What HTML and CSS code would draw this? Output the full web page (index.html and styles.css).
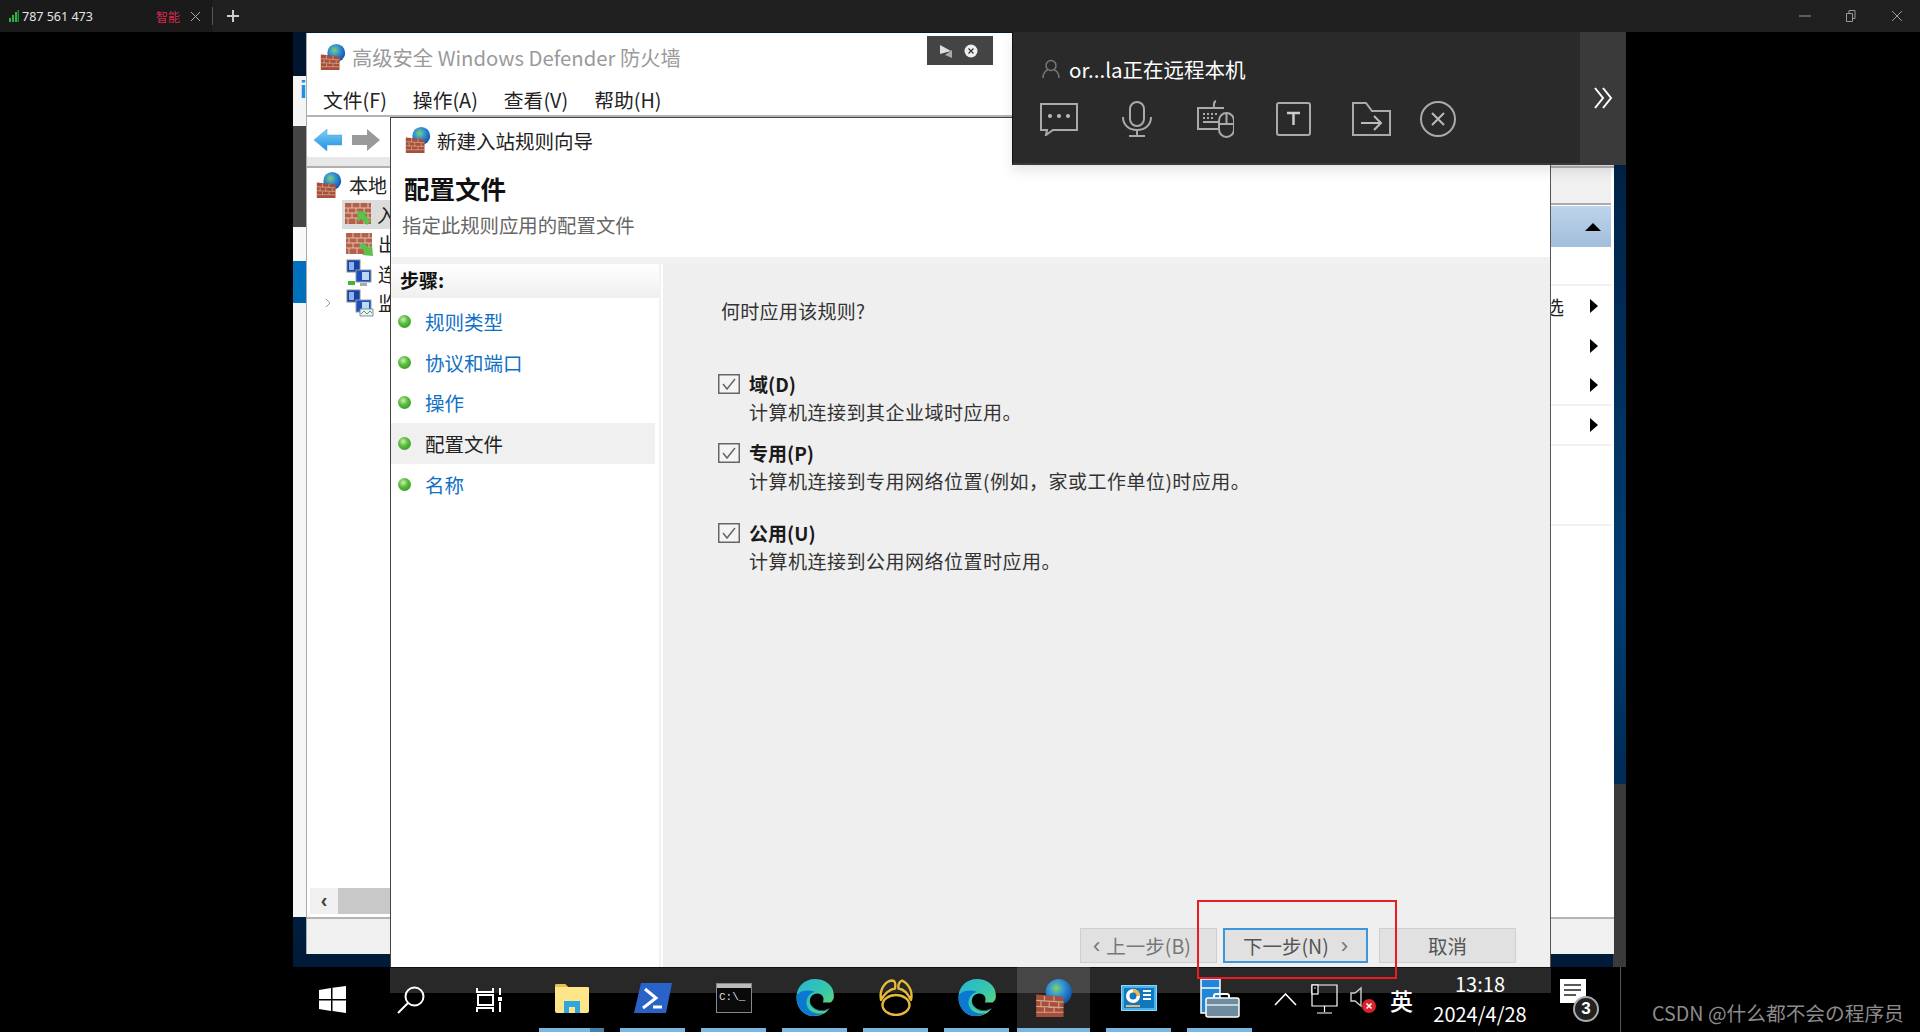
FILE: index.html
```html
<!DOCTYPE html>
<html lang="zh-CN">
<head>
<meta charset="utf-8">
<title>远程桌面</title>
<link rel="stylesheet" href="styles.css">
</head>
<body>
<svg class="defs" width="0" height="0" aria-hidden="true">
  <defs>
    <radialGradient id="globe" cx="40%" cy="35%" r="70%">
      <stop offset="0" stop-color="#7fd36a"/><stop offset=".45" stop-color="#2f8fd8"/><stop offset="1" stop-color="#0c4f9e"/>
    </radialGradient>
    <radialGradient id="dot" cx="40%" cy="35%" r="70%">
      <stop offset="0" stop-color="#c8f0b0"/><stop offset=".5" stop-color="#58bd3c"/><stop offset="1" stop-color="#3a9a28"/>
    </radialGradient>
    <linearGradient id="arrowblue" x1="0" y1="0" x2="0" y2="1">
      <stop offset="0" stop-color="#7fd0f8"/><stop offset="1" stop-color="#1e8fe0"/>
    </linearGradient>
    <linearGradient id="edgeg" x1="0" y1="0" x2="1" y2="1">
      <stop offset="0" stop-color="#27b4d8"/><stop offset=".55" stop-color="#38c8a8"/><stop offset="1" stop-color="#7fdc60"/>
    </linearGradient>
    <symbol id="firewall" viewBox="0 0 32 32">
      <circle cx="20" cy="11" r="11" fill="url(#globe)"/>
      <path d="M1 13l23 2v17H1z" fill="#a5503a"/>
      <path d="M1 18l23 1.500M1 23l23 1M1 28h23M8 14v5M16 14.500v5M5 19v5M12 19.500v5M20 20v5M8 24v4M16 24v4" stroke="#d8a18e" stroke-width="1" fill="none"/>
    </symbol>
    <symbol id="edge" viewBox="0 0 40 40">
      <path d="M20 1C9 1 1 9 1 20c0 10 7 19 17 19 7 0 13-2 17-8-5 3-14 3-18-2-3-3-3-8 0-11 3-3 9-3 11 1 1 2 1 4 0 6h8c3-2 4-5 3-10C38 7 30 1 20 1z" fill="url(#edgeg)"/>
      <path d="M1 20c0 10 7 19 17 19 4 0 8-1 11-3-6 1-13 0-16-5-4-6-1-15 7-17-9-3-19 0-19 6z" fill="#0c78d0"/>
      <path d="M14 22c0 6 5 12 14 12 2 0 5-1 7-3-5 3-14 3-18-2-2-2-3-4-3-7z" fill="#0b4f9a"/>
    </symbol>
    <symbol id="rowbrick" viewBox="0 0 28 28">
      <path d="M0 3h26v21H0z" fill="#b5604a"/>
      <path d="M0 8h26M0 13h26M0 18h26M7 3v5M15 3v5M23 3v5M3 8v5M11 8v5M19 8v5M7 13v5M15 13v5M23 13v5M3 18v6M11 18v6M19 18v6" stroke="#e2c0b2" stroke-width="1"/>
    </symbol>
    <symbol id="netpc" viewBox="0 0 28 28">
      <rect x="1" y="1" width="13" height="12" fill="#1740a8" stroke="#8a8a8a"/>
      <rect x="10" y="11" width="15" height="12" fill="#1a4fc0" stroke="#9a9a9a"/>
      <rect x="16" y="13" width="7" height="8" fill="#bcd8f4"/>
      <rect x="3" y="3" width="5" height="8" fill="#8cb4ec"/>
      <rect x="14" y="24" width="7" height="3" fill="#aaa"/>
    </symbol>
  </defs>
</svg>

<header class="topbar">
  <div class="tab">
    <svg class="signal" viewBox="0 0 10 12" width="10" height="12"><path d="M0 8h2v4H0zM3 5h2v7H3zM6 2h2v10H6z" fill="#2fb344"/><path d="M8.500 0h1.500v12H8.500z" fill="#1f8a32"/></svg>
    <span class="conn-id">787 561 473</span>
    <span class="conn-mode">智能</span>
    <svg class="tab-x" viewBox="0 0 9 9" width="9" height="9"><path d="M0 0l9 9M9 0L0 9" stroke="#aaa"/></svg>
  </div>
  <span class="tab-sep"></span>
  <svg class="tab-add" viewBox="0 0 14 14" width="14" height="14"><path d="M7 1v12M1 7h12" stroke="#ccc" stroke-width="2"/></svg>
  <div class="winctl">
    <svg viewBox="0 0 12 12" width="12" height="12"><path d="M0 6h12" stroke="#9a9a9a"/></svg>
    <svg viewBox="0 0 12 12" width="12" height="12"><path d="M1.500 3.500h6v8h-6zM4 3V.5h6v8H8" fill="none" stroke="#9a9a9a"/></svg>
    <svg viewBox="0 0 12 12" width="12" height="12"><path d="M1 1l10 10M11 1L1 11" stroke="#9a9a9a"/></svg>
  </div>
</header>

<main class="stage">
  <div class="desktop">
    <div class="edge-strip">
      <span class="es es-navy"></span>
      <span class="es es-white"><i>i</i></span>
      <span class="es es-grey"></span>
      <span class="es es-white2"></span>
      <span class="es es-blue"></span>
      <span class="es es-white3"></span>
    </div>
    <div class="right-strip"></div>

    <section class="mmc">
      <div class="mmc-title">
        <svg class="ico-26"><use href="#firewall"/></svg>
        <span>高级安全 Windows Defender 防火墙</span>
      </div>
      <nav class="mmc-menu">
        <span>文件(F)</span><span>操作(A)</span><span>查看(V)</span><span>帮助(H)</span>
      </nav>
      <div class="mmc-tools">
        <svg viewBox="0 0 28 22" width="28" height="22"><path d="M0 11L13 0v6h15v10H13v6z" fill="url(#arrowblue)" stroke="#4aa3e0" stroke-width=".5"/></svg>
        <svg viewBox="0 0 28 22" width="28" height="22"><path d="M28 11L15 0v6H0v10h15v6z" fill="#9a9a9a"/></svg>
      </div>
      <div class="mmc-band"></div>
      <div class="mmc-body">
        <div class="tree">
          <div class="tree-row tree-root"><svg class="ico-26"><use href="#firewall"/></svg><span class="tree-txt">本地</span></div>
          <div class="tree-row tree-sel"><svg class="ico-28"><use href="#rowbrick"/><path d="M12 11l11 1-3 3 6 6-4 4-6-6-3 3z" fill="#5cc04a"/></svg><span class="tree-txt">入</span></div>
          <div class="tree-row"><svg class="ico-28"><use href="#rowbrick"/><path d="M27 26l-11-1 3-3-6-6 4-4 6 6 3-3z" fill="#5cc04a"/></svg><span class="tree-txt">出</span></div>
          <div class="tree-row"><svg class="ico-28"><use href="#netpc"/><rect x="2" y="22" width="7" height="4" fill="#46b03a"/></svg><span class="tree-txt">连</span></div>
          <div class="tree-row"><svg class="tree-chev" viewBox="0 0 6 10" width="6" height="10"><path d="M1 1l4 4-4 4" fill="none" stroke="#999"/></svg><svg class="ico-28"><use href="#netpc"/><path d="M14 20h13v7H14z" fill="#e8f4f4" stroke="#88a"/><path d="M15 25l3-3 3 3 3-3 2 2" fill="none" stroke="#4aa84a"/></svg><span class="tree-txt">监</span></div>
          <div class="tree-scroll"><span class="sb-btn">‹</span><span class="sb-thumb"></span></div>
        </div>
        <aside class="actions">
          <div class="act-top"></div>
          <div class="act-head"><span class="tri-up"></span></div>
          <div class="act-gap"></div>
          <div class="act-row"><span class="act-txt">选</span><span class="tri-right"></span></div>
          <div class="act-row"><span class="tri-right"></span></div>
          <div class="act-row act-line"><span class="tri-right"></span></div>
          <div class="act-row act-line"><span class="tri-right"></span></div>
          <div class="act-row act-line act-tall"></div>
        </aside>
      </div>
      <div class="mmc-foot"></div>
    </section>
  </div>

  <section class="wizard">
    <div class="wz-title"><svg class="ico-26"><use href="#firewall"/></svg><span>新建入站规则向导</span></div>
    <div class="wz-head">
      <h1>配置文件</h1>
      <p>指定此规则应用的配置文件</p>
    </div>
    <div class="wz-main">
      <div class="steps">
        <div class="steps-title">步骤:</div>
        <div class="step link"><svg class="dot"><circle cx="6.500" cy="6.500" r="6.500" fill="url(#dot)"/></svg><span>规则类型</span></div>
        <div class="step link"><svg class="dot"><circle cx="6.500" cy="6.500" r="6.500" fill="url(#dot)"/></svg><span>协议和端口</span></div>
        <div class="step link"><svg class="dot"><circle cx="6.500" cy="6.500" r="6.500" fill="url(#dot)"/></svg><span>操作</span></div>
        <div class="step current"><svg class="dot"><circle cx="6.500" cy="6.500" r="6.500" fill="url(#dot)"/></svg><span>配置文件</span></div>
        <div class="step link"><svg class="dot"><circle cx="6.500" cy="6.500" r="6.500" fill="url(#dot)"/></svg><span>名称</span></div>
      </div>
      <div class="content">
        <div class="question">何时应用该规则?</div>
        <div class="opt opt-a">
          <svg class="cb" viewBox="0 0 22 20"><rect x=".75" y=".75" width="20.500" height="18.500" fill="#f4f4f4" stroke="#666" stroke-width="1.500"/><path d="M5 10l4 5 8-10" fill="none" stroke="#666" stroke-width="1.500"/></svg>
          <div><div class="opt-t">域(D)</div><div class="opt-d">计算机连接到其企业域时应用。</div></div>
        </div>
        <div class="opt opt-b">
          <svg class="cb" viewBox="0 0 22 20"><rect x=".75" y=".75" width="20.500" height="18.500" fill="#f4f4f4" stroke="#666" stroke-width="1.500"/><path d="M5 10l4 5 8-10" fill="none" stroke="#666" stroke-width="1.500"/></svg>
          <div><div class="opt-t">专用(P)</div><div class="opt-d">计算机连接到专用网络位置(例如，家或工作单位)时应用。</div></div>
        </div>
        <div class="opt opt-c">
          <svg class="cb" viewBox="0 0 22 20"><rect x=".75" y=".75" width="20.500" height="18.500" fill="#f4f4f4" stroke="#666" stroke-width="1.500"/><path d="M5 10l4 5 8-10" fill="none" stroke="#666" stroke-width="1.500"/></svg>
          <div><div class="opt-t">公用(U)</div><div class="opt-d">计算机连接到公用网络位置时应用。</div></div>
        </div>
        <div class="wz-btns">
          <button class="btn btn-off"><span class="chev">‹</span>上一步(B)</button>
          <button class="btn btn-next">下一步(N)<span class="chev">›</span></button>
          <button class="btn btn-cancel">取消</button>
        </div>
      </div>
    </div>
  </section>

  <section class="rc-panel">
    <div class="rc-left">
      <div class="rc-user">
        <svg viewBox="0 0 20 20" width="20" height="20"><circle cx="10" cy="6.500" r="5" fill="none" stroke="#777" stroke-width="1.500"/><path d="M2 19c0-5 3-8 5-8M18 19c0-5-3-8-5-8" fill="none" stroke="#777" stroke-width="1.500"/></svg>
        <span>or...la正在远程本机</span>
      </div>
      <div class="rc-icons">
        <div class="rc-cell"><svg viewBox="0 0 40 34" width="40" height="34"><path d="M2 2h36v26H14l-7 5 1-5H2z" fill="none" stroke="#aaa" stroke-width="2"/><circle cx="11" cy="14" r="2" fill="#bbb"/><circle cx="20" cy="14" r="2" fill="#bbb"/><circle cx="29" cy="14" r="2" fill="#bbb"/></svg></div>
        <div class="rc-cell"><svg viewBox="0 0 30 36" width="30" height="36"><rect x="8" y="1" width="14" height="24" rx="7" fill="none" stroke="#aaa" stroke-width="2"/><path d="M1 16c0 8 6 13 14 13s14-5 14-13M15 29v6M7 35h16" fill="none" stroke="#aaa" stroke-width="2"/></svg></div>
        <div class="rc-cell"><svg viewBox="0 0 38 38" width="38" height="38"><path d="M28 8H2v21h20M18 8c0-4-1-6 2-7" fill="none" stroke="#aaa" stroke-width="2"/><path d="M7 14h2M11 14h2M15 14h2M19 14h2M7 18h2M11 18h2M15 18h2M7 22h16" stroke="#aaa" stroke-width="2"/><rect x="23" y="13" width="15" height="24" rx="7.500" fill="#2a2a2a" stroke="#aaa" stroke-width="2"/><path d="M23 24h15M30.500 13v11" stroke="#aaa" stroke-width="2"/></svg></div>
        <div class="rc-cell"><svg viewBox="0 0 35 34" width="35" height="34"><rect x="1" y="1" width="33" height="32" rx="2" fill="none" stroke="#aaa" stroke-width="2"/><path d="M11 11h13M17.500 11v12" stroke="#ccc" stroke-width="2.500" fill="none"/></svg></div>
        <div class="rc-cell"><svg viewBox="0 0 39 34" width="39" height="34"><path d="M1 33V1h13l6 8h18v24z" fill="none" stroke="#aaa" stroke-width="2"/><path d="M9 21h20M22 14l7 7-7 7" fill="none" stroke="#bbb" stroke-width="2"/></svg></div>
        <div class="rc-cell rc-last"><svg viewBox="0 0 36 36" width="36" height="36"><circle cx="18" cy="18" r="17" fill="none" stroke="#aaa" stroke-width="2"/><path d="M12 12l12 12M24 12L12 24" stroke="#bbb" stroke-width="2"/></svg></div>
      </div>
    </div>
    <div class="rc-right">
      <svg viewBox="0 0 20 22" width="20" height="22"><path d="M2 1l8 10-8 10M10 1l8 10-8 10" fill="none" stroke="#fff" stroke-width="2"/></svg>
    </div>
  </section>

  <div class="rc-mini">
    <svg viewBox="0 0 14 14" width="14" height="14"><path d="M1 1l11 6-11 3z" fill="#ddd"/><path d="M13 6v8L6 11z" fill="#aaa"/></svg>
    <svg viewBox="0 0 14 14" width="14" height="14"><circle cx="7" cy="7" r="6.500" fill="#eee"/><path d="M4.500 4.500l5 5M9.500 4.500l-5 5" stroke="#333" stroke-width="1.200"/></svg>
  </div>
</main>

<footer class="taskbar">
  <div class="task-band"></div>
  <div class="sys-cell cell-start">
    <svg viewBox="0 0 27 27" width="27" height="27"><path d="M0 4l12-2v11H0zM13.500 1.800L27 0v13H13.500zM0 14.500h12v10.500L0 23zM13.500 14.500H27V27l-13.500-2z" fill="#fff"/></svg>
  </div>
  <div class="sys-cell cell-search">
    <svg viewBox="0 0 28 28" width="28" height="28"><circle cx="17.500" cy="10.500" r="9" fill="none" stroke="#fff" stroke-width="2"/><path d="M11 17L1 27" stroke="#fff" stroke-width="2"/></svg>
  </div>
  <div class="sys-cell cell-view">
    <svg viewBox="0 0 26 26" width="26" height="26"><path d="M1 1v4h16V1M2 8h15v10H2zM1 25v-4h16v4M24 1v7M24 15v10" fill="none" stroke="#fff" stroke-width="2"/><rect x="22" y="10" width="4" height="4" fill="#fff"/></svg>
  </div>
  <div class="app">
    <div class="app-ico"><svg viewBox="0 0 36 30" width="36" height="30"><path d="M1 3q0-2 2-2h8l3 3h20q1 0 1 1v23q0 2-2 2H3q-2 0-2-2z" fill="#fde68a"/><path d="M1 3q0-2 2-2h8l3 3H1z" fill="#e8c04c"/><path d="M10 18h16v12h-5v-6h-6v6h-5z" fill="#2ea6de"/></svg></div>
    <span class="app-bar app-bar-split"></span>
  </div>
  <div class="app">
    <div class="app-ico"><svg viewBox="0 0 38 30" width="38" height="30"><path d="M7 0h31l-6 30H0z" fill="#2a63c8"/><path d="M11 6l11 9-13 10" fill="none" stroke="#fff" stroke-width="3"/><path d="M19 24h9" stroke="#fff" stroke-width="3"/></svg></div>
    <span class="app-bar"></span>
  </div>
  <div class="app">
    <div class="app-ico"><svg viewBox="0 0 36 30" width="36" height="30"><rect x=".5" y=".5" width="35" height="29" fill="#0a0a0a" stroke="#888"/><rect x="1" y="1" width="34" height="4" fill="#bbb"/><text x="3" y="17" class="cmd-txt">C:\_</text></svg></div>
    <span class="app-bar"></span>
  </div>
  <div class="app">
    <div class="app-ico"><svg width="40" height="39"><use href="#edge"/></svg></div>
    <span class="app-bar"></span>
  </div>
  <div class="app">
    <div class="app-ico"><svg viewBox="0 0 36 37" width="36" height="37"><ellipse cx="18" cy="26" rx="13.500" ry="10" fill="none" stroke="#e6b93a" stroke-width="2.400"/><path d="M3 21C1 11 7 2 14 1.500c3 0 4 3 3 8C12 10 6 15 3 21zM33 21c2-8-2-16-9-19.500C21 3 20 6 20.500 9.500 26 10 30 15 33 21z" fill="none" stroke="#e6b93a" stroke-width="2.400" stroke-linejoin="round"/></svg></div>
    <span class="app-bar"></span>
  </div>
  <div class="app">
    <div class="app-ico"><svg width="40" height="39"><use href="#edge"/></svg></div>
    <span class="app-bar"></span>
  </div>
  <div class="app app-active">
    <div class="app-ico"><svg width="38" height="38"><use href="#firewall"/></svg></div>
    <span class="app-bar app-bar-full"></span>
  </div>
  <div class="app">
    <div class="app-ico"><svg viewBox="0 0 36 26" width="36" height="26"><rect x=".5" y=".5" width="35" height="25" fill="#43b4ee" stroke="#8cd4f8"/><rect x="3" y="3" width="30" height="20" fill="#1277bf"/><circle cx="12" cy="11" r="7" fill="#fff"/><path d="M12 11V4a7 7 0 017 7z" fill="#f4b73e"/><circle cx="12" cy="11" r="3.500" fill="#1277bf"/><path d="M22 6h8M22 10h8M22 14h8" stroke="#fff" stroke-width="2"/><path d="M5 21h14" stroke="#f2b55a" stroke-width="2"/></svg></div>
    <span class="app-bar"></span>
  </div>
  <div class="app">
    <div class="app-ico"><svg viewBox="0 0 40 40" width="40" height="40"><rect x="1" y="1" width="19" height="34" fill="#2185d8" stroke="#fff" stroke-width="1.500"/><path d="M1 10h19" stroke="#fff" stroke-width="1.500"/><path d="M14 21v-3q0-2 2-2h11q2 0 2 2v3" fill="none" stroke="#fff" stroke-width="2"/><rect x="6" y="20" width="33" height="19" rx="2" fill="#6f8ba0" stroke="#fff" stroke-width="1.500"/><path d="M6 27h33" stroke="#dfe8ee" stroke-width="1.500"/></svg></div>
    <span class="app-bar"></span>
  </div>
  <div class="tray">
    <svg class="t-up" viewBox="0 0 23 13" width="23" height="13"><path d="M1 12L11.500 1 22 12" fill="none" stroke="#fff" stroke-width="1.600"/></svg>
    <svg class="t-net" viewBox="0 0 27 31" width="27" height="31"><path d="M1 1h25v21H1zM13.500 22v6M6 29h15" fill="none" stroke="#fff" stroke-width="1.200"/><rect x="1" y="1" width="6" height="9" fill="#000" stroke="#fff" stroke-width="1.200"/><circle cx="4" cy="4" r=".8" fill="#fff"/></svg>
    <svg class="t-spk" viewBox="0 0 26 28" width="26" height="28"><path d="M1 7h4l6-5v18l-6-5H1z" fill="none" stroke="#ccc" stroke-width="1.400"/><circle cx="19" cy="20" r="7" fill="#d8232a"/><path d="M16.500 17.500l5 5M21.500 17.500l-5 5" stroke="#fff" stroke-width="1.600"/></svg>
    <span class="t-ime">英</span>
    <div class="t-clock"><span>13:18</span><span>2024/4/28</span></div>
    <div class="t-note">
      <svg viewBox="0 0 26 24" width="26" height="24"><path d="M0 0h26v24H8l-8 0z" fill="#fff"/><path d="M4 6h17M4 11h17M4 16h12" stroke="#222" stroke-width="1.600"/></svg>
      <span class="t-badge">3</span>
    </div>
    <span class="t-line"></span>
    <span class="t-mark">CSDN @什么都不会の程序员</span>
  </div>
</footer>

<div class="redbox"></div>
</body>
</html>
```

FILE: styles.css
```css
* { box-sizing: border-box; }
html, body { margin: 0; padding: 0; }
body {
  width: 1920px; height: 1032px; overflow: hidden; background: #000;
  font-family: "Noto Sans CJK SC", "Noto Sans", sans-serif; color: #222;
  display: flex; flex-direction: column; position: relative;
}
.defs { position: absolute; }
svg { display: block; flex: none; }
.ico-26 { width: 26px; height: 26px; }
.ico-28 { width: 28px; height: 28px; }

/* top bar */
.topbar { height: 32px; background: #202020; display: flex; align-items: center; flex: none; }
.tab { width: 212px; height: 32px; background: #1a1a1a; display: flex; align-items: center; padding-left: 9px; }
.signal { margin-right: 3px; }
.conn-id { font: 12.5px "Noto Sans", sans-serif; color: #e4e4e4; width: 134px; white-space: nowrap; }
.conn-mode { font-size: 12px; color: #dd2a52; }
.tab-x { margin-left: 11px; }
.tab-sep { width: 1px; height: 18px; background: #555; }
.tab-add { margin-left: 13px; }
.winctl { margin-left: auto; display: flex; gap: 34px; padding-right: 17px; }

/* stage */
.stage { flex: 1; position: relative; overflow: hidden; background: #000; }
.desktop { position: absolute; left: 293px; top: 0; width: 1333px; height: 935px; background: linear-gradient(#001a38, #003d72 60%, #001a38); }
.edge-strip { width: 13px; height: 885px; display: flex; flex-direction: column; }
.es { display: block; flex: none; }
.es-navy { height: 44px; background: #00162f; }
.es-white { height: 50px; background: #f4f4f4; position: relative; overflow: hidden; }
.es-white i { position: absolute; left: 7px; top: 0; font: bold 24px "Liberation Sans", sans-serif; color: #1f8fe0; }
.es-grey { height: 101px; background: #444; }
.es-white2 { height: 34px; background: #f8f8f8; }
.es-blue { height: 42px; background: #0070bd; }
.es-white3 { height: 614px; background: #f6f6f6; }
.right-strip { position: absolute; right: 0; top: 752px; bottom: 0; width: 13px; background: #3a3a3a; }

/* MMC window */
.mmc { position: absolute; left: 13px; top: 1px; width: 1308px; height: 921px; background: #fff; display: flex; flex-direction: column; border-left: 1px solid #aaa; }
.mmc-title { height: 47px; display: flex; align-items: center; padding-left: 13px; gap: 6px; font-size: 20.300px; color: #9a9a9a; flex: none; }
.mmc-menu { height: 37px; display: flex; gap: 26px; align-items: center; padding: 3px 0 0 16px; font-size: 19.800px; color: #222; border-bottom: 2px solid #b4b4b4; flex: none; }
.mmc-tools { height: 40px; display: flex; align-items: center; gap: 10px; padding: 5px 0 0 7px; flex: none; }
.mmc-band { height: 11px; background: #e8e8e8; border-bottom: 2px solid #b0b0b0; flex: none; }
.mmc-body { flex: 1; display: flex; justify-content: space-between; min-height: 0; }
.tree { width: 84px; display: flex; flex-direction: column; padding-top: 2px; }
.tree-row { height: 29.500px; display: flex; align-items: center; padding-left: 39px; font-size: 19px; gap: 4px; white-space: nowrap; position: relative; flex: none; }
.tree-txt { min-width: 0; }
.tree-root { padding-left: 9px; gap: 7px; }
.tree-sel { background: #dcdcdc; margin-left: 35px; padding-left: 3px; }
.tree-chev { position: absolute; left: 18px; top: 10px; }
.tree-scroll { margin-top: auto; height: 29px; display: flex; padding: 0 0 3px 3px; }
.sb-btn { width: 28px; background: #f0f0f0; text-align: center; font: bold 20px/24px "Liberation Sans", sans-serif; color: #444; }
.sb-thumb { flex: 1; background: #c8c8c8; }
.actions { width: 73px; padding-right: 3px; background: #fff; display: flex; flex-direction: column; }
.act-top { height: 37px; background: #f0f0f0; border-bottom: 2px solid #aaa; flex: none; }
.act-head { height: 41px; background: linear-gradient(#bed4ec, #a2bedb); display: flex; align-items: center; justify-content: flex-end; padding-right: 10px; flex: none; margin-top: 1px; }
.act-gap { height: 39px; flex: none; border-bottom: 2px solid #f0f0f0; }
.act-row { height: 40px; display: flex; align-items: center; justify-content: flex-end; padding-right: 13px; font-size: 19px; flex: none; white-space: nowrap; }
.act-line { border-bottom: 2px solid #f0f0f0; }
.act-tall { height: 80px; }
.act-txt { margin-right: 26px; color: #222; }
.tri-up { width: 0; height: 0; border-left: 8px solid transparent; border-right: 8px solid transparent; border-bottom: 8px solid #000; }
.tri-right { width: 0; height: 0; border-top: 7px solid transparent; border-bottom: 7px solid transparent; border-left: 8px solid #000; }
.mmc-foot { height: 37px; background: #f0f0f0; border-top: 2px solid #b4b4b4; flex: none; }

/* wizard */
.wizard { position: absolute; left: 390px; top: 85px; width: 1161px; height: 850px; background: #fff; border: 1px solid #444; border-bottom: 0; border-right-color: #555; display: flex; flex-direction: column; }
.wz-title { height: 44px; display: flex; align-items: center; gap: 6px; padding-left: 14px; font-size: 19.500px; color: #222; flex: none; }
.wz-head { height: 102px; padding: 8px 0 0 11px; border-bottom: 7px solid #f1f1f1; flex: none; }
.wz-head h1 { margin: 0; font-size: 25.500px; line-height: 36px; font-weight: 700; color: #111; padding-left: 2px; }
.wz-head p { margin: 0; font-size: 19.400px; line-height: 28px; color: #666; padding-top: 5px; }
.wz-main { flex: 1; display: flex; min-height: 0; }
.steps { width: 270px; border-right: 2px solid #f2f2f2; flex: none; }
.steps-title { height: 34px; background: linear-gradient(#fff, #efefef); font-size: 19px; font-weight: 700; line-height: 32px; padding-left: 9px; color: #111; margin-bottom: 3px; }
.step { height: 40.800px; display: flex; align-items: center; font-size: 19.500px; padding-left: 7px; gap: 14px; margin-right: 4px; }
.step.link { color: #1070c4; }
.step.current { color: #222; background: #f0f0f0; }
.dot { width: 13px; height: 13px; }
.content { flex: 1; background: #efefef; position: relative; margin-left: 2px; padding: 33px 0 0 55px; display: flex; flex-direction: column; }
.question { font-size: 19px; line-height: 28px; color: #333; padding-left: 3px; letter-spacing: .3px; }
.opt { display: flex; gap: 9px; position: relative; }
.opt-a { margin-top: 46px; }
.opt-b { margin-top: 13px; }
.opt-c { margin-top: 24px; }
.cb { width: 22px; height: 20px; margin-top: 3px; }
.opt-t { font-size: 19px; line-height: 26px; font-weight: 700; color: #1a1a1a; }
.opt-d { font-size: 19px; line-height: 30px; color: #333; white-space: nowrap; letter-spacing: .5px; }
.wz-btns { margin-top: auto; margin-right: 34px; display: flex; justify-content: flex-end; padding-bottom: 4px; }
.btn { height: 35px; width: 137px; font: 19.500px "Noto Sans CJK SC", sans-serif; background: #e1e1e1; border: 1px solid #cfcfcf; color: #555; display: flex; align-items: center; justify-content: center; padding: 0; gap: 6px; }
.btn-off { color: #777; justify-content: flex-start; padding-left: 12px; white-space: nowrap; }
.btn-next { width: 145px; margin-left: 6px; border: 2px solid #3a96dd; gap: 12px; white-space: nowrap; }
.btn-cancel { margin-left: 11px; }
.chev { font: 22px/26px "Liberation Sans", sans-serif; color: #777; }

/* remote panel */
.rc-panel { position: absolute; left: 1012px; top: 0; width: 614px; height: 133px; background: #2a2a2a; display: flex; border-left: 1px solid #111; border-bottom: 2px solid #3a3a3a; box-shadow: 0 6px 12px rgba(0,0,0,.1); }
.rc-left { width: 567px; padding: 26px 0 0 28px; }
.rc-user { display: flex; align-items: center; gap: 8px; height: 22px; color: #fff; font-size: 20.500px; white-space: nowrap; }
.rc-icons { display: flex; align-items: center; margin: 19px 0 0 -21px; height: 40px; }
.rc-cell { width: 78px; display: flex; justify-content: center; flex: none; }
.rc-last { margin-left: -11px; }
.rc-right { flex: 1; background: #3a3a3a; display: flex; align-items: center; justify-content: center; }
.rc-mini { position: absolute; left: 927px; top: 4px; width: 66px; height: 29px; background: #444; display: flex; align-items: center; gap: 11px; padding-left: 12px; }

/* taskbar */
.taskbar { height: 65px; flex: none; background: #000; display: flex; padding-left: 293px; position: relative; color: #fff; }
.task-band { position: absolute; left: 390px; top: 0; width: 1161px; height: 26px; background: #282828; border-top: 1px solid #111; }
.sys-cell { position: relative; display: flex; align-items: center; justify-content: center; height: 65px; flex: none; }
.cell-start { width: 79px; }
.cell-search { width: 78px; }
.cell-view { width: 81px; padding-right: 3px; }
.app { width: 81px; height: 65px; display: flex; flex-direction: column; position: relative; flex: none; }
.app-ico { flex: 1; display: flex; align-items: center; justify-content: center; }
.app-bar { height: 4px; margin: 0 8px; background: #7bb5e2; }
.app-bar-split { background: linear-gradient(90deg, #7bb5e2 78%, #4a7fa8 78%); }
.app-active { background: rgba(255,255,255,.14); width: 73px; margin-right: 8px; }
.app-bar-full { margin: 0; }
.cmd-txt { font: 11px "Liberation Mono", monospace; fill: #ddd; }
.tray { display: flex; align-items: center; position: relative; }
.t-up { margin-left: 14px; }
.t-net { margin-left: 14px; }
.t-spk { margin-left: 12px; }
.t-ime { margin-left: 14px; width: 24px; font-size: 23px; line-height: 30px; font-weight: 500; color: #fff; }
.t-clock { margin-left: 17px; width: 98px; display: flex; flex-direction: column; align-items: center; font-size: 20px; line-height: 30px; white-space: nowrap; padding-bottom: 2px; }
.t-note { margin-left: 31px; width: 40px; height: 48px; position: relative; padding-top: 3px; }
.t-badge { position: absolute; left: 13px; top: 20px; width: 26px; height: 26px; border-radius: 50%; background: #222; border: 2px solid #aaa; color: #fff; font: bold 17px/22px "Liberation Sans", sans-serif; text-align: center; }
.t-line { margin-left: 20px; width: 1px; height: 65px; background: #555; }
.t-mark { margin-left: 31px; margin-top: 26px; font-size: 19.700px; color: #8c8c8c; white-space: nowrap; }

.redbox { position: absolute; left: 1197px; top: 900px; width: 200px; height: 79px; border: 2px solid #e81c24; }
```
